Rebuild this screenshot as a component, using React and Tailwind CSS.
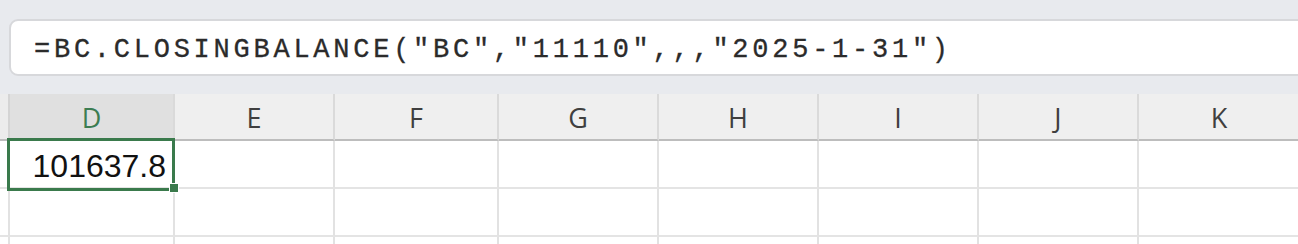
import React from "react";

const cols = [
  { l: "D", sel: true },
  { l: "E" },
  { l: "F" },
  { l: "G" },
  { l: "H" },
  { l: "I" },
  { l: "J" },
  { l: "K", last: true },
];

const gridCols =
  "grid grid-cols-[10px_165px_160px_164px_160px_160px_160px_160px_160px]";

export default function App() {
  return (
    <div className="w-[1298px] h-[244px] overflow-hidden bg-white">
      {/* formula bar area */}
      <div className="bg-[#e8eaee] pt-[19px] pb-[18px] pl-[9px]">
        <div className="h-[57px] w-[1310px] rounded-l-[9px] border-2 border-[#d7d8db] bg-white flex items-center pl-[23px] pt-[5px]">
          <span
            className="text-[27px] tracking-[3.75px] text-[#2b2b2b] whitespace-pre [-webkit-text-stroke:0.3px_#2b2b2b]"
            style={{ fontFamily: '"Liberation Mono", "DejaVu Sans Mono", monospace' }}
          >
            =BC.CLOSINGBALANCE("BC","11110",,,"2025-1-31")
          </span>
        </div>
      </div>

      {/* header row */}
      <div className={gridCols + " h-[47px]"}>
        <div className="bg-[#ececec] border-r-2 border-r-[#d4d4d4] border-b-2 border-b-[#bdbdbd]" />
        {cols.map((c) => (
          <div
            key={c.l}
            className={
              "flex items-center justify-center border-b-2 border-b-[#bdbdbd] " +
              (c.last ? "" : "border-r-2 border-r-[#dadada] ") +
              (c.sel ? "bg-[#e0e0e0] text-[#3c7d52]" : "bg-[#efefef] text-[#3f3f3f]")
            }
            style={{ fontFamily: '"Open Sans", "Noto Sans", sans-serif' }}
          >
            <span className="text-[27px] leading-none pt-[2px]">{c.l}</span>
          </div>
        ))}
      </div>

      {/* rows */}
      {[0, 1, 2].map((r) => (
        <div key={r} className={gridCols + (r === 2 ? " h-[20px]" : " h-[48px]")}>
          <div className="bg-white border-r-2 border-r-[#e2e2e2] border-b-2 border-b-[#e4e4e4]" />
          {cols.map((c) => (
            <div
              key={c.l}
              className={
                "relative bg-white border-b-2 border-b-[#e4e4e4] " +
                (c.last ? "" : "border-r-2 border-r-[#e2e2e2]")
              }
            >
              {r === 0 && c.sel && (
                <>
                  <div className="absolute z-10 left-[-3px] top-[-3px] w-[168px] h-[53px] border-[3px] border-[#3a7a4c] flex items-center justify-end pr-[6px]">
                    <span
                      className="text-[32px] leading-none text-[#111111] pt-[2px]"
                      style={{ fontFamily: '"Liberation Sans", Arial, sans-serif' }}
                    >
                      101637.8
                    </span>
                  </div>
                  <div className="absolute z-20 left-[159px] top-[42px] w-[10px] h-[10px] bg-[#3a7a4c] border border-white" />
                </>
              )}
            </div>
          ))}
        </div>
      ))}
    </div>
  );
}
